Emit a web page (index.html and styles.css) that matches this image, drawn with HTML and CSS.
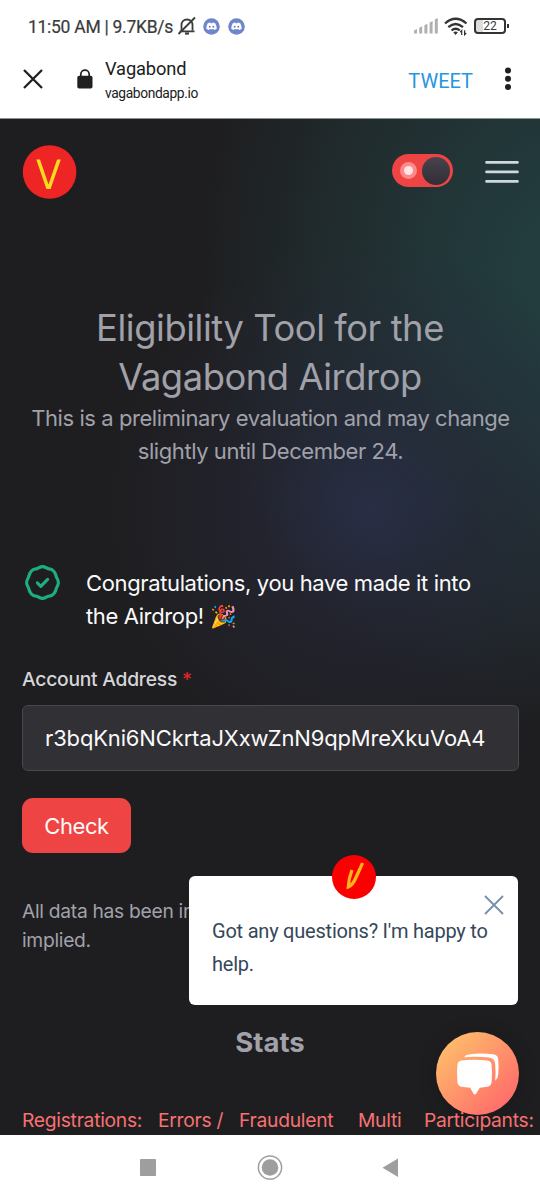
FILE: index.html
```html
<!DOCTYPE html>
<html lang="en">
<head>
<meta charset="utf-8">
<title>Vagabond</title>
<link rel="stylesheet" href="styles.css">
</head>
<body>
<div class="phone">
  <div class="status">
    <span class="clock">11:50 AM | 9.7KB/s</span>
    <svg class="bell" width="20" height="20" viewBox="0 0 20 20" fill="none" stroke="#3b3b3b" stroke-width="1.8"><path d="M4.5 14.5V9c0-3 2-5.500 5.500-5.500S15.500 6 15.500 9v5.500"/><path d="M2.500 15.300h15M18 1.500L1.500 18"/><path d="M8 17.500h4" stroke-width="2.200"/></svg>
    <svg class="discord" width="17" height="17" viewBox="0 0 17 17"><circle cx="8.500" cy="8.500" r="8.300" fill="#6f85cc"/><path d="M4.600 5.500q1.600-.9 2.700-.9l.4.600h1.600l.4-.6q1.100 0 2.700.9 1.400 2.600 1.300 5.300-1.200 1-2.600 1.100l-.6-1q-2 .5-4 0l-.6 1q-1.400-.1-2.600-1.100-.1-2.700 1.300-5.300z" fill="#fff"/><circle cx="6.700" cy="8.700" r="1" fill="#6f85cc"/><circle cx="10.300" cy="8.700" r="1" fill="#6f85cc"/></svg>
    <svg class="discord" width="17" height="17" viewBox="0 0 17 17"><circle cx="8.500" cy="8.500" r="8.300" fill="#6f85cc"/><path d="M4.600 5.500q1.600-.9 2.700-.9l.4.600h1.600l.4-.6q1.100 0 2.700.9 1.400 2.600 1.300 5.300-1.200 1-2.600 1.100l-.6-1q-2 .5-4 0l-.6 1q-1.400-.1-2.600-1.100-.1-2.700 1.300-5.300z" fill="#fff"/><circle cx="6.700" cy="8.700" r="1" fill="#6f85cc"/><circle cx="10.300" cy="8.700" r="1" fill="#6f85cc"/></svg>
    <svg class="signal" width="24" height="16" viewBox="0 0 24 16" fill="#b0b0b0"><path d="M0 12.500l3-1.500v4.500H0zM5.200 9.800l3-1.500v7.200h-3zM10.400 7.200l3-1.500v9.800h-3zM15.600 4.500l3-1.500v12.500h-3zM20.800 1.500l3-1.500v15.500h-3z"/></svg>
    <svg class="wifi" width="24" height="19" viewBox="0 0 24 19" fill="none" stroke="#333" stroke-width="2.200"><path d="M1 6.500Q11.500-3 22.500 6.500M4.300 10.200q7.300-6.400 14.700 0M7.500 13.500q4.200-3.500 8.300 0"/><path d="M9.300 15.300q2.300-1.500 4.600 0l-2.300 2.600z" fill="#333" stroke="none"/><path d="M17.700 18v-4.500l-1.500 1.700M20.600 13.200v4.500l1.600-1.700" stroke-width="1.200"/></svg>
    <span class="battery">22</span>
  </div>
  <div class="toolbar">
    <svg class="close" width="20" height="20" viewBox="0 0 20 20" stroke="#202020" stroke-width="2.300"><path d="M1 1l18 18M19 1L1 19"/></svg>
    <svg class="lock" width="16" height="20" viewBox="0 0 16 20"><path d="M3.800 8V5.400a4.200 4.200 0 0 1 8.400 0V8" fill="none" stroke="#202020" stroke-width="1.700"/><rect x=".3" y="6.800" width="15.200" height="12.700" rx="1.800" fill="#202020"/></svg>
    <div class="site"><span class="name">Vagabond</span><span class="host">vagabondapp.io</span></div>
    <span class="tweet">TWEET</span>
    <svg class="dots" width="8" height="24" viewBox="0 0 8 24" fill="#202020"><circle cx="4" cy="3.500" r="3"/><circle cx="4" cy="11.700" r="3"/><circle cx="4" cy="19.900" r="3"/></svg>
  </div>
  <main class="page">
    <header class="header">
      <svg class="logo" width="55" height="54" viewBox="-.6 0 55 54"><circle cx="27" cy="27" r="26.800" fill="#ee2524"/><path d="M13.700 14.600h3.700l8.500 24.900 8.600-24.900h3.700L28 44h-4.200z" fill="#f7dc1e"/></svg>
      <span class="toggle"><i class="sun"></i><i class="knob"></i></span>
      <svg class="menu" width="34" height="24" viewBox="0 0 34 24" stroke="#cfd8dc" stroke-width="2.600" stroke-linecap="round"><path d="M1.500 2.400h31M1.500 11.900h31M1.500 21.400h31"/></svg>
    </header>
    <h1 class="title">Eligibility Tool for the<br>Vagabond Airdrop</h1>
    <p class="lead">This is a preliminary evaluation and may change<br>slightly until December 24.</p>
    <section class="notice">
      <svg class="badge" width="41" height="41" viewBox="0 0 24 24" fill="none" stroke="#1dae7c" stroke-width="1.850" stroke-linecap="round" stroke-linejoin="round"><path d="M12 2.700C13.400 2.700 14.100 3.500 15.300 3.900C16.500 4.200 17.400 4.100 18.500 5.300C19.700 6.400 19.700 7.500 20.100 8.600C20.500 9.800 21.300 10.500 21.300 12C21.300 13.500 20.500 14.200 20.100 15.400C19.700 16.500 19.700 17.600 18.500 18.700C17.400 19.900 16.500 19.800 15.300 20.100C14.100 20.500 13.400 21.300 12 21.300C10.600 21.300 9.900 20.500 8.700 20.100C7.500 19.800 6.600 19.900 5.500 18.700C4.300 17.600 4.300 16.500 3.900 15.400C3.500 14.200 2.700 13.500 2.700 12C2.700 10.500 3.500 9.800 3.900 8.600C4.300 7.500 4.300 6.400 5.500 5.300C6.600 4.100 7.500 4.200 8.700 3.900C9.900 3.500 10.600 2.700 12 2.700Z"/><path d="M9 12.200l2 2 4-4"/></svg>
      <p class="message">Congratulations, you have made it into<br>the Airdrop! <span class="emoji">🎉</span></p>
    </section>
    <label class="label" for="addr">Account Address <b>*</b></label>
    <input class="field" id="addr" value="r3bqKni6NCkrtaJXxwZnN9qpMreXkuVoA4">
    <button class="check">Check</button>
    <p class="note">All data has been indexed, no liability is<br>implied.</p>
    <h2 class="stats">Stats</h2>
    <div class="columns"><span class="c1">Registrations:</span><span class="c2">Errors /</span><span class="c3">Fraudulent</span><span class="c4">Multi</span><span class="c5">Participants:</span></div>
    <aside class="popup">
      <svg class="avatar" width="44" height="44" viewBox="0 0 44 44"><circle cx="22" cy="22" r="22" fill="#fb0000"/><path d="M20 15c-2 5-3.400 11-3.700 17 3-1 5.500-4.500 7.700-9.500 2-4.500 4.300-9 6.500-14.500" fill="none" stroke="#ffb31a" stroke-width="3.300"/></svg>
      <svg class="dismiss" width="20" height="20" viewBox="0 0 20 20" stroke="#7890ab" stroke-width="1.900"><path d="M1 1l18 18M19 1L1 19"/></svg>
      <p class="question">Got any questions? I'm happy to<br>help.</p>
    </aside>
    <div class="chat"><svg width="44" height="44" viewBox="0 0 44 44" fill="#fff"><path d="M6.500 9.400q13-1.500 26 0 3.700.5 4 4.200.9 9 0 18-.4 3.600-4 4.200-3.500.6-7.700.9l-3.700 6q-1.300 1.500-2.600 0l-3.300-6q-5-.2-8.700-.9-3.600-.6-4-4.200-.9-9 0-18 .4-3.700 4-4.200z"/><path d="M9.300 6.200Q9.800 4 13.500 3.400q12-1.500 24.500-.2 4.800.5 5.200 5 .8 7.500 0 15.500-.4 4.300-3 6 .7-8 0-16.500-.4-6-6.200-6.600-12-1.300-24.700-.4z"/></svg></div>
  </main>
  <nav class="nav">
    <svg width="540" height="64" viewBox="0 0 540 64" fill="#9e9e9e"><rect x="140" y="24" width="16" height="17" rx=".7"/><circle cx="270" cy="32.500" r="8.300"/><circle cx="270" cy="32.500" r="11.600" fill="none" stroke="#9e9e9e" stroke-width="1.500"/><path d="M398 23.500v18.500l-15.500-9.300z"/></svg>
  </nav>
</div>
</body>
</html>
```
FILE: styles.css
```css
* { box-sizing: border-box; }
body { margin: 0; background: #fff; }
h1, h2, p { margin: 0; font-weight: 400; }
svg { display: block; flex: none; }
.phone { width: 540px; height: 1200px; display: flex; flex-direction: column; overflow: hidden; font-family: Inter, sans-serif; white-space: nowrap; }

.status { height: 52px; display: flex; align-items: center; padding: 0 34px 0 28px; font-family: Roboto, sans-serif; color: #3b3b3b; }
.clock { width: 145px; font-size: 17.500px; letter-spacing: -.28px; -webkit-text-stroke: .2px #3b3b3b; padding-top: 1px; }
.bell { margin-left: 4px; }
.discord { margin-left: 6px; }
.discord + .discord { margin-left: 8px; }
.signal { margin-left: auto; }
.wifi { margin-left: 6px; }
.battery { position: relative; width: 32px; height: 16px; margin-left: 6px; border: 2px solid #333; border-radius: 4px; background: linear-gradient(90deg, #ddd 7px, #fff 7px); text-align: center; font-size: 12px; line-height: 13px; }
.battery::after { content: ""; position: absolute; right: -5px; top: 4px; width: 2px; height: 4px; background: #333; }

.toolbar { height: 67px; display: flex; align-items: center; padding: 1px 28px 14px 23px; font-family: Roboto, sans-serif; color: #202020; border-bottom: 1px solid #8b9090; }
.lock { margin-left: 34px; }
.site { display: flex; flex-direction: column; margin-left: 12px; padding-top: 5px; }
.name { font-size: 18.300px; line-height: 24px; letter-spacing: -.13px; }
.host { font-size: 13.800px; line-height: 24px; letter-spacing: -.38px; }
.tweet { margin-left: auto; font-size: 20px; color: #2995dc; padding-top: 5px; }
.dots { margin-left: 31px; }

.page { position: relative; height: 1016px; display: flex; flex-direction: column; align-items: flex-start; overflow: hidden; padding: 0 22px; color: #a1a1aa;
  background:
    radial-gradient(circle 270px at 370px 390px, rgba(41,46,72,.9), rgba(39,41,60,.5) 40%, rgba(30,30,32,0)),
    radial-gradient(ellipse 370px 450px at 570px 160px, #233f40 0%, #22383a 30%, #212e30 58%, rgba(30,30,32,0) 100%),
    #1e1e20; }
.header { width: 497px; height: 185px; padding-top: 26px; display: flex; align-items: flex-start; }
.toggle { width: 61px; height: 33px; margin: 9px 0 0 315px; padding: 2px 3px 2px 8px; border-radius: 17px; background: #ef4444; display: flex; align-items: center; justify-content: space-between; }
.sun { width: 9px; height: 9px; margin-left: 4px; border-radius: 50%; background: #ffe5e5; box-shadow: 0 0 0 4px #f88; }
.knob { width: 28px; height: 28px; border-radius: 50%; background: linear-gradient(#48434d, #302e36); }
.menu { margin: 15px 0 0 32px; }
.title { width: 496px; text-align: center; font-size: 36.300px; letter-spacing: -.42px; line-height: 49px; }
.lead { width: 497px; text-align: center; font-size: 22px; letter-spacing: -.43px; line-height: 33px; }
.notice { display: flex; margin-top: 98px; color: #fafafa; }
.badge { margin-top: -4px; }
.message { margin-left: 23px; padding-top: 1px; font-size: 22px; letter-spacing: -.37px; line-height: 33px; }
.emoji { font-size: 21.500px; font-family: "Noto Color Emoji", sans-serif; line-height: 1; margin-left: 1px; }
.label { margin-top: 32px; font-size: 19.250px; letter-spacing: -.24px; font-weight: 500; line-height: 28px; color: #d6d6d9; }
.label b { color: #dc2626; font-weight: 500; }
.field { width: 497px; height: 66px; margin-top: 12px; padding: 0 22px; border: 1px solid #48484d; border-radius: 6px; background: #303035; color: #fafafa; font: 22px Inter, sans-serif; letter-spacing: -.15px; outline: 0; }
.check { width: 109px; height: 55px; margin-top: 27px; padding: 0; border: 0; border-radius: 11px; background: #ef4444; color: #fafafa; font: 22px Inter, sans-serif; letter-spacing: -.4px; }
.note { margin-top: 44px; font-size: 19.250px; letter-spacing: -.3px; line-height: 29px; }
.stats { width: 496px; margin-top: 69px; text-align: center; font-size: 27.500px; font-weight: 700; line-height: 36px; }
.columns { width: 513px; display: flex; justify-content: space-between; margin-top: 46px; font-size: 19.250px; letter-spacing: -.27px; line-height: 28px; color: #f87171; }
.columns span { flex: none; }
.columns .c1 { width: 136px; }
.columns .c2 { width: 81px; }
.columns .c3 { width: 119px; }
.columns .c4 { width: 66px; }
.columns .c5 { width: 111px; position: relative; z-index: 2; }

.popup { position: absolute; left: 189px; top: 757px; width: 329px; height: 129px; padding: 39px 23px; border-radius: 6px; background: #fff; color: #36475a; font-family: Roboto, sans-serif; }
.avatar { position: absolute; left: 143px; top: -21px; }
.dismiss { position: absolute; right: 14px; top: 19px; }
.question { font-size: 20px; letter-spacing: -.22px; line-height: 33px; }
.chat { position: absolute; left: 436px; top: 913px; width: 83px; height: 83px; padding: 19px 0 0 19px; border-radius: 50%; background: linear-gradient(135deg, #ffc36a 5%, #ff6b6b 88%); box-shadow: 0 2px 20px rgba(0,0,0,.2); }
.nav { height: 65px; background: #fff; }
```
